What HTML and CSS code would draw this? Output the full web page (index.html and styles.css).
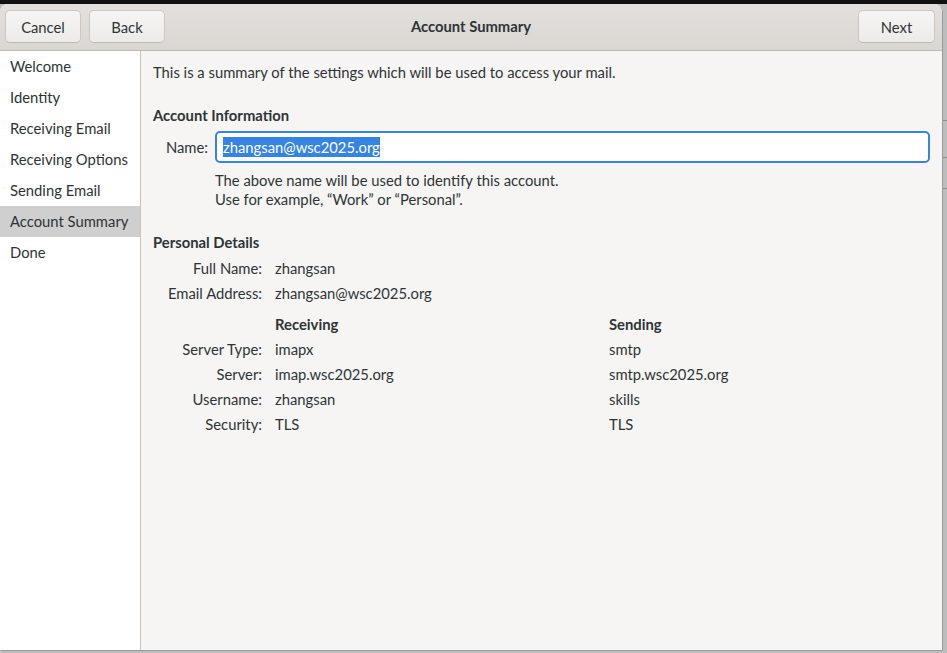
FILE: index.html
```html
<!DOCTYPE html>
<html>
<head>
<meta charset="utf-8">
<link rel="stylesheet" href="styles.css">
</head>
<body>
<div class="topstrip"></div>
<div class="window">
  <header class="headerbar">
    <div class="hb-left">
      <button class="btn">Cancel</button>
      <button class="btn">Back</button>
    </div>
    <div class="hb-title">Account Summary</div>
    <div class="hb-right">
      <button class="btn">Next</button>
    </div>
  </header>
  <div class="main">
    <nav class="sidebar">
      <div class="nav-item">Welcome</div>
      <div class="nav-item">Identity</div>
      <div class="nav-item">Receiving Email</div>
      <div class="nav-item">Receiving Options</div>
      <div class="nav-item">Sending Email</div>
      <div class="nav-item selected">Account Summary</div>
      <div class="nav-item">Done</div>
    </nav>
    <section class="content">
      <p class="intro">This is a summary of the settings which will be used to access your mail.</p>
      <h2 class="heading">Account Information</h2>
      <div class="name-grid">
        <span class="label">Name:</span>
        <div class="entry"><span class="sel">zhangsan@wsc2025.org</span></div>
      </div>
      <div class="helper">
        <div>The above name will be used to identify this account.</div>
        <div>Use for example, “Work” or “Personal”.</div>
      </div>
      <h2 class="heading personal">Personal Details</h2>
      <div class="details">
        <span class="label">Full Name:</span><span class="val span2">zhangsan</span>
        <span class="label">Email Address:</span><span class="val span2">zhangsan@wsc2025.org</span>
        <span class="label spacer-row"></span><span class="colhead spacer-row">Receiving</span><span class="colhead spacer-row">Sending</span>
        <span class="label">Server Type:</span><span class="val">imapx</span><span class="val">smtp</span>
        <span class="label">Server:</span><span class="val">imap.wsc2025.org</span><span class="val">smtp.wsc2025.org</span>
        <span class="label">Username:</span><span class="val">zhangsan</span><span class="val">skills</span>
        <span class="label">Security:</span><span class="val">TLS</span><span class="val">TLS</span>
      </div>
    </section>
  </div>
</div>
<div class="outside-lines">
  <div class="oline l1"></div>
  <div class="oline l2"></div>
  <div class="oline l3"></div>
</div>
</body>
</html>
```

FILE: styles.css
```css
html, body {
  margin: 0;
  padding: 0;
}
body {
  width: 947px;
  height: 653px;
  overflow: hidden;
  background: #bdbdbd;
  font-family: Lato, "Noto Sans", sans-serif;
  font-size: 14.8px;
  color: #2e3436;
  position: relative;
}
.topstrip {
  height: 4px;
  background: #111;
}
.window {
  width: 942px;
  height: 646px;
  border-radius: 8px 8px 0 0;
  overflow: hidden;
  display: flex;
  flex-direction: column;
  box-shadow: 1px 1px 0 #9a9a9a;
  background: #f6f5f4;
  position: relative;
  z-index: 1;
}
.headerbar {
  flex: none;
  background: linear-gradient(to top, #dad6d2, #e3e0dd);
  border-bottom: 1px solid #bfb8b1;
  display: flex;
  align-items: flex-start;
  justify-content: space-between;
  padding: 6px 7px 0 5px;
  box-sizing: border-box;
  height: 47px;
  position: relative;
}
.hb-left, .hb-right {
  display: flex;
  gap: 8px;
}
.btn {
  width: 76px;
  height: 33px;
  font-family: inherit;
  font-size: 14.8px;
  color: #2e3436;
  background: linear-gradient(to top, #edebe9, #f6f5f4);
  border: 1px solid #cdc7c2;
  border-bottom-color: #bfb8b1;
  border-radius: 5px;
  padding: 0;
}
.hb-right .btn {
  width: 77px;
}
.hb-title {
  position: absolute;
  left: 0;
  right: 0;
  top: 12px;
  line-height: 20px;
  text-align: center;
  font-weight: bold;
  pointer-events: none;
}
.main {
  flex: 1;
  display: flex;
  min-height: 0;
}
.sidebar {
  width: 140px;
  flex: none;
  background: #fff;
  border-right: 1px solid #c8c3bd;
}
.nav-item {
  height: 31px;
  line-height: 31px;
  padding-left: 10px;
  white-space: nowrap;
}
.nav-item.selected {
  background: #cfcfcf;
}
.content {
  flex: 1;
  padding: 11px 12px 0 12px;
}
.intro {
  margin: 0;
  line-height: 20px;
}
.heading {
  margin: 23px 0 0 0;
  font-size: 14.8px;
  line-height: 20px;
  font-weight: bold;
}
.name-grid {
  margin: 6px 0 0 12px;
  display: grid;
  grid-template-columns: 43px 1fr;
  column-gap: 7px;
  align-items: center;
}
.label {
  text-align: right;
  white-space: nowrap;
}
.entry {
  height: 28px;
  border: 2px solid #3584e4;
  border-radius: 5px;
  background: #fff;
  display: flex;
  align-items: center;
  padding-left: 6px;
}
.sel {
  background: #3584e4;
  color: #fff;
  line-height: 20px;
}
.helper {
  margin: 8px 0 0 62px;
  line-height: 19px;
}
.heading.personal {
  margin-top: 23px;
}
.details {
  margin: 6px 0 0 12px;
  display: grid;
  grid-template-columns: 97px 321px 1fr;
  column-gap: 13px;
  row-gap: 5px;
  line-height: 20px;
}
.span2 {
  grid-column: span 2;
}
.spacer-row {
  margin-top: 6px;
}
.colhead {
  font-weight: bold;
}
.val {
  white-space: nowrap;
}
.outside-lines {
  position: absolute;
  left: 943px;
  top: 0;
  width: 4px;
  height: 653px;
}
.oline {
  position: absolute;
  left: 0;
  width: 4px;
  height: 1px;
  background: #8f8f8f;
}
.l1 { top: 120px; }
.l2 { top: 157px; }
.l3 { top: 188px; }
```
